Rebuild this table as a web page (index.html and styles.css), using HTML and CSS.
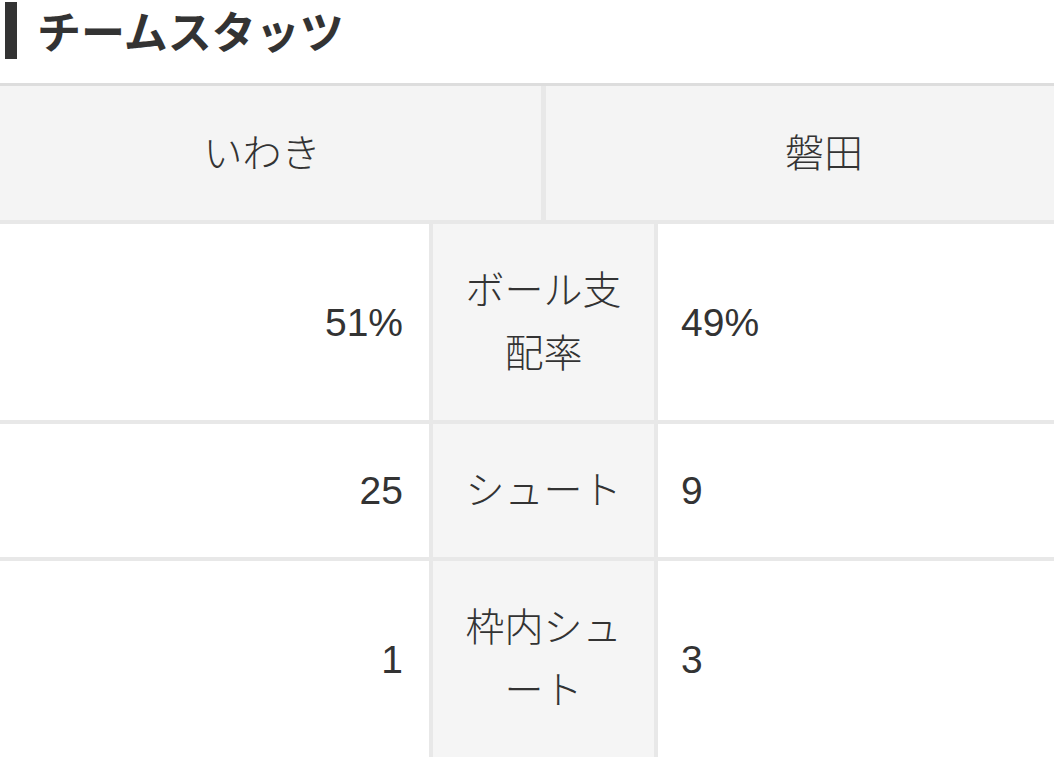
FILE: index.html
```html
<!DOCTYPE html>
<html lang="ja">
<head>
<meta charset="utf-8">
<title>チームスタッツ</title>
<link rel="stylesheet" href="styles.css">
</head>
<body>
<h2 class="title"><span class="title-bar"></span><span class="title-text">チームスタッツ</span></h2>
<div class="stats">
  <div class="stats-head">
    <div class="head-cell">いわき</div>
    <div class="head-cell">磐田</div>
  </div>
  <div class="stats-row">
    <div class="val val-home">51%</div>
    <div class="label">ボール支配率</div>
    <div class="val val-away">49%</div>
  </div>
  <div class="stats-row">
    <div class="val val-home">25</div>
    <div class="label">シュート</div>
    <div class="val val-away">9</div>
  </div>
  <div class="stats-row">
    <div class="val val-home">1</div>
    <div class="label">枠内シュート</div>
    <div class="val val-away">3</div>
  </div>
</div>
</body>
</html>
```
FILE: styles.css
```css
html, body {
  margin: 0;
  padding: 0;
  overflow: hidden;
  background: #fff;
}
body {
  font-family: "Liberation Sans", "Noto Sans CJK JP", sans-serif;
  font-weight: 300;
  color: #333;
  width: 1054px;
}
.title {
  display: flex;
  align-items: center;
  margin: 2px 0 24px 5px;
  height: 57px;
}
.title-bar {
  width: 12px;
  height: 57px;
  background: #333;
  flex: none;
}
.title-text {
  margin-left: 20px;
  font-family: "Noto Sans CJK JP", sans-serif;
  font-size: 44px;
  font-weight: bold;
  line-height: 57px;
  color: #333;
}
.stats {
  margin-left: -17px;
  width: 1119px;
  border-top: 3px solid #dddddd;
  background: #e8e8e8;
  display: flex;
  flex-direction: column;
  gap: 4px;
}
.stats-head {
  display: grid;
  grid-template-columns: 558px 556px;
  column-gap: 5px;
}
.head-cell {
  background: #f4f4f4;
  height: 134px;
  display: flex;
  align-items: center;
  justify-content: center;
  font-size: 39px;
  line-height: 63px;
}
.stats-row {
  display: grid;
  grid-template-columns: 446px 221px 444px;
  column-gap: 4px;
}
.val, .label {
  padding: 35px 0;
  font-size: 39px;
  line-height: 63px;
  display: flex;
  align-items: center;
}
.val {
  background: #fff;
}
.val-home {
  justify-content: flex-end;
  padding-right: 26px;
}
.val-away {
  padding-left: 23px;
}
.label {
  background: #f5f5f5;
  justify-content: center;
  text-align: center;
  padding-left: 23px;
  padding-right: 23px;
}
```
